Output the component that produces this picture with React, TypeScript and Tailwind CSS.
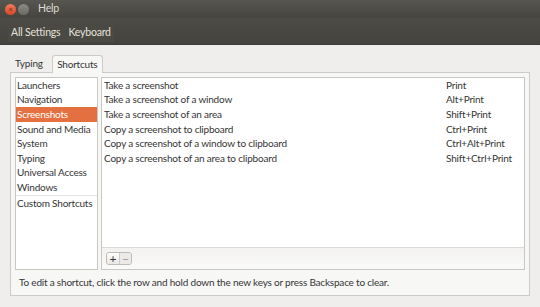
const categories = [
  "Launchers",
  "Navigation",
  "Screenshots",
  "Sound and Media",
  "System",
  "Typing",
  "Universal Access",
  "Windows",
];

const shortcuts = [
  ["Take a screenshot", "Print"],
  ["Take a screenshot of a window", "Alt+Print"],
  ["Take a screenshot of an area", "Shift+Print"],
  ["Copy a screenshot to clipboard", "Ctrl+Print"],
  ["Copy a screenshot of a window to clipboard", "Ctrl+Alt+Print"],
  ["Copy a screenshot of an area to clipboard", "Shift+Ctrl+Print"],
];

export default function App() {
  return (
    <div
      className="flex h-[307px] w-[540px] flex-col overflow-hidden bg-[#efeeec] text-[10px] tracking-[-0.2px] text-[#353535]"
      style={{ fontFamily: 'Lato, "Noto Sans", sans-serif' }}
    >
      {/* title bar */}
      <div className="flex h-[18px] items-center bg-gradient-to-b from-[#57564f] to-[#45443f] pl-[5px]">
        <span className="flex h-[11px] w-[11px] items-center justify-center rounded-full bg-gradient-to-b from-[#f07a5a] to-[#d8452a] text-[8px] leading-none text-[#7a2a1a]">
          ×
        </span>
        <span className="ml-[2px] h-[11px] w-[11px] rounded-full bg-gradient-to-b from-[#8c8a84] to-[#6b6a65]" />
        <span className="ml-[9px] text-[10.5px] text-[#dfdbd2]">Help</span>
      </div>

      {/* toolbar */}
      <div className="flex h-[27px] items-center border-b border-[#3c3b37] bg-gradient-to-b from-[#4c4b46] to-[#44433e] pl-[8px] pt-[3px]">
        <div className="flex h-[19px] items-center gap-[8px] bg-[#4a4944] px-[3px] text-[10.5px] text-[#e6e3dc]">
          <span>All Settings</span>
          <span>Keyboard</span>
        </div>
      </div>

      {/* content */}
      <div className="flex flex-1 flex-col px-[10px] pt-[10px]">
        <div className="flex h-[17px] items-end">
          <span className="px-[5px] pb-[1px]">Typing</span>
          <span className="relative top-[1px] ml-[4px] flex h-[18px] w-[51px] items-center justify-center rounded-t-[3px] border border-b-0 border-[#cdcbc7] bg-[#f7f7f6]">
            Shortcuts
          </span>
        </div>

        <div className="flex h-[224px] flex-col border border-[#cdcbc7] bg-[#f7f7f6] px-[4px] pt-[4px]">
          <div className="flex h-[193px] gap-[3px]">
            <div className="flex w-[83px] flex-col border border-[#c9c7c3] bg-white">
              {categories.map((c) => (
                <div
                  key={c}
                  className={`flex h-[14.6px] items-center whitespace-nowrap pl-[1px] ${
                    c === "Screenshots" ? "bg-[#e46f40] text-white" : ""
                  }`}
                >
                  {c}
                </div>
              ))}
              <div className="flex h-[16px] items-center whitespace-nowrap border-t border-[#e4e3e0] pl-[1px]">
                Custom Shortcuts
              </div>
            </div>

            <div className="flex flex-1 flex-col border border-[#c9c7c3]">
              <div className="flex-1 bg-white">
                {shortcuts.map(([name, key]) => (
                  <div key={name} className="flex h-[14.6px] items-center pl-[2px]">
                    <span className="flex-1">{name}</span>
                    <span className="w-[78px]">{key}</span>
                  </div>
                ))}
              </div>
              <div className="flex h-[22px] items-center border-t border-[#dcdad6] bg-gradient-to-b from-[#f3f2f0] to-[#fafaf9] pl-[4px]">
                <div className="flex h-[13px] rounded-[3px] border border-[#bdbbb7]">
                  <span className="flex w-[12px] items-center justify-center rounded-l-[3px] bg-gradient-to-b from-white to-[#e8e7e4] text-[12px] leading-[11px] text-[#333]">
                    +
                  </span>
                  <span className="flex w-[12px] items-center justify-center rounded-r-[3px] border-l border-[#cfcdc9] bg-[#eceae7] text-[12px] leading-[11px] text-[#999]">
                    −
                  </span>
                </div>
              </div>
            </div>
          </div>
          <div className="flex flex-1 items-center pl-[4px]">
            To edit a shortcut, click the row and hold down the new keys or press Backspace to clear.
          </div>
        </div>
      </div>
    </div>
  );
}
